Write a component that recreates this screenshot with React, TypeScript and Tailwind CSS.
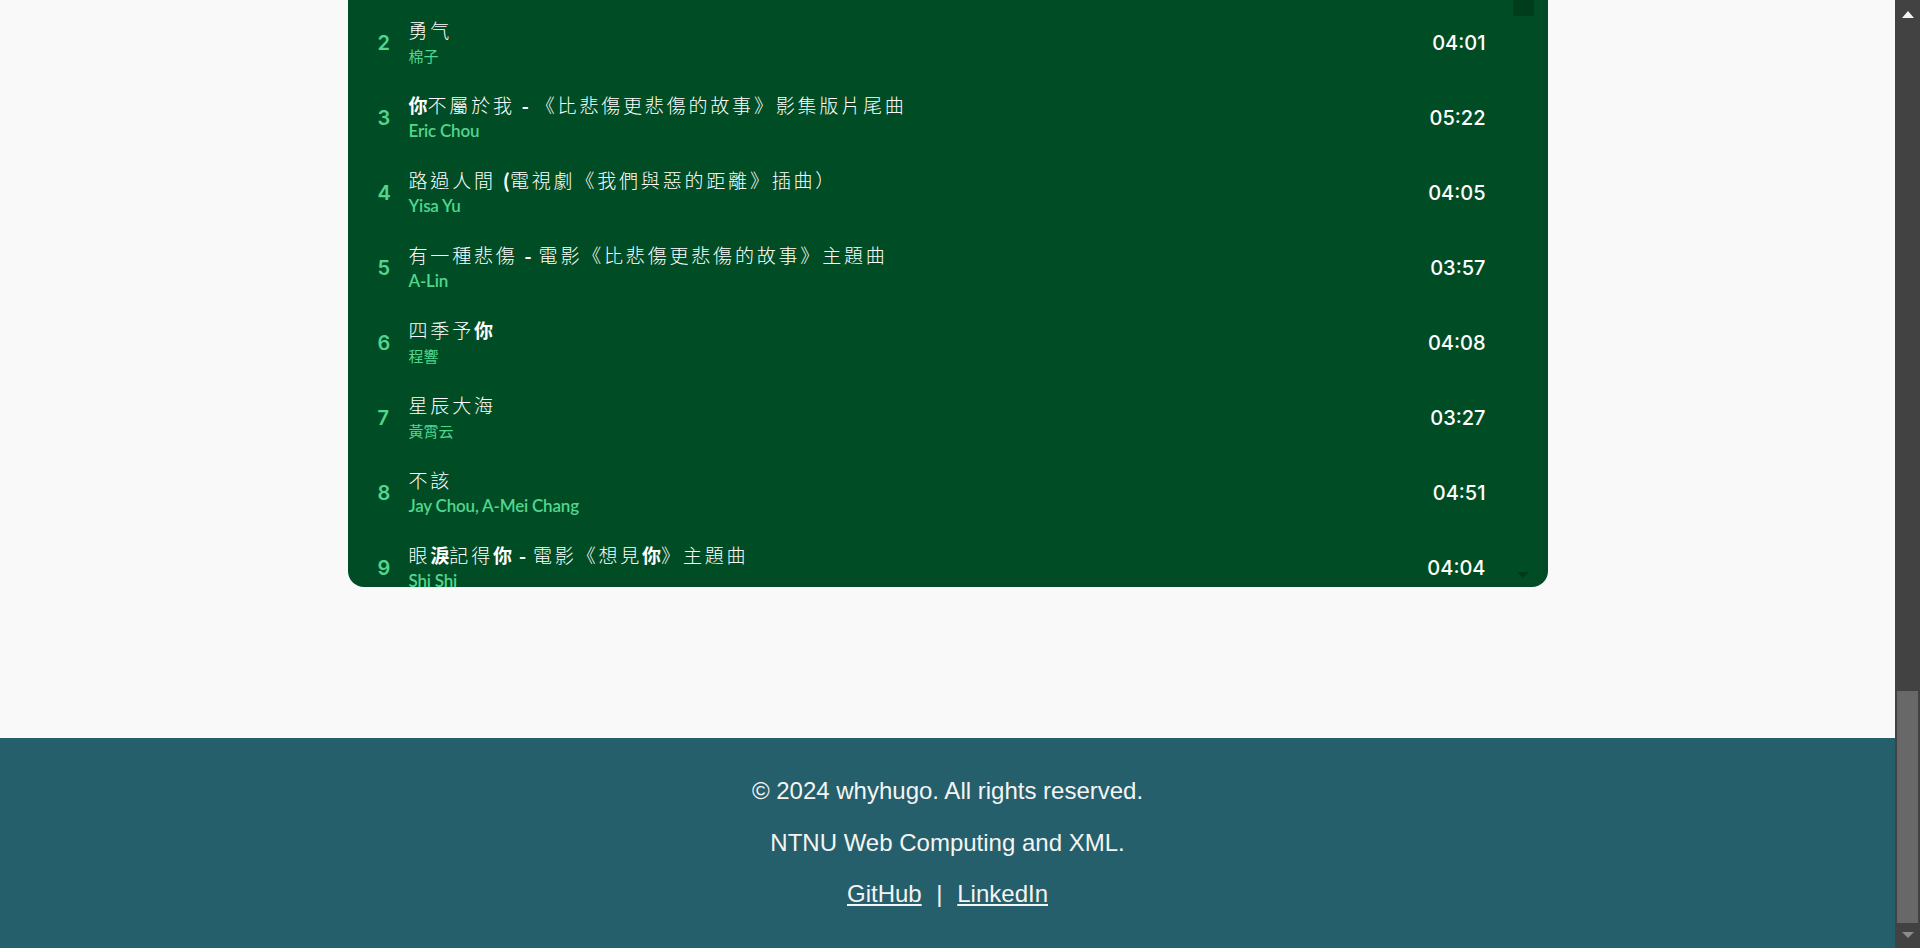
import React from "react";

const songs = [
  { n: 2, title: "勇气", artist: "棉子", time: "04:01" },
  { n: 3, title: "你不屬於我 - 《比悲傷更悲傷的故事》影集版片尾曲", artist: "Eric Chou", time: "05:22" },
  { n: 4, title: "路過人間 (電視劇《我們與惡的距離》插曲）", artist: "Yisa Yu", time: "04:05" },
  { n: 5, title: "有一種悲傷 - 電影《比悲傷更悲傷的故事》主題曲", artist: "A-Lin", time: "03:57" },
  { n: 6, title: "四季予你", artist: "程響", time: "04:08" },
  { n: 7, title: "星辰大海", artist: "黃霄云", time: "03:27" },
  { n: 8, title: "不該", artist: "Jay Chou, A-Mei Chang", time: "04:51" },
  { n: 9, title: "眼淚記得你 - 電影《想見你》主題曲", artist: "Shi Shi", time: "04:04" },
];

const boldChars = new Set(["你", "淚", "-", "("]);

function Title({ text }: { text: string }) {
  return (
    <>
      {Array.from(text).map((c, i) =>
        boldChars.has(c) ? (
          <span key={i} className="font-bold tracking-normal">
            {c}
          </span>
        ) : (
          <React.Fragment key={i}>{c}</React.Fragment>
        )
      )}
    </>
  );
}

export default function App() {
  return (
    <div className="flex h-[948px] w-full overflow-hidden bg-[#f9f9f9]">
      <div className="flex min-w-0 flex-1 flex-col">
        <main className="h-[738px] shrink-0">
          <div className="mx-auto flex h-[587px] w-[1200px] overflow-hidden rounded-b-2xl bg-[#004d25]">
            <ul className="flex-1 overflow-hidden pt-[5px]">
              {songs.map((s) => {
                const latin = /[A-Za-z]/.test(s.artist);
                return (
                  <li key={s.n} className="flex h-[75px] shrink-0 items-center pl-[30px] pr-[27px]">
                    <span className="w-[31px] font-['Inter',sans-serif] text-[20px] font-semibold text-[#52d68e]">
                      {s.n}
                    </span>
                    <div className="flex min-w-0 flex-1 flex-col">
                      <span className="font-['Noto_Sans_CJK_TC',sans-serif] text-[19px] font-light leading-[24px] tracking-[2.8px] text-white">
                        <Title text={s.title} />
                      </span>
                      {latin ? (
                        <span className="mt-[2px] font-['Lato',sans-serif] text-[17px] font-semibold leading-[24px] tracking-[-0.2px] text-[#52d68e]">
                          {s.artist}
                        </span>
                      ) : (
                        <span className="mt-[2px] font-['Noto_Sans_CJK_TC',sans-serif] text-[15px] font-normal leading-[24px] text-[#52d68e]">
                          {s.artist}
                        </span>
                      )}
                    </div>
                    <span className="font-['Inter',sans-serif] text-[20px] font-medium text-white">{s.time}</span>
                  </li>
                );
              })}
            </ul>
            <div className="mr-[14px] flex w-[21px] flex-col items-center justify-between pb-[9px]">
              <div className="h-[16px] w-full bg-[#003d1c]" />
              <div className="h-0 w-0 border-x-[6px] border-t-[6px] border-x-transparent border-t-[#003a1a]" />
            </div>
          </div>
        </main>
        <footer className="flex-1 bg-[#245f6b] pt-[15px] text-center font-['Liberation_Sans',Arial,sans-serif] text-[24px] leading-[27.6px] text-[#f4f4f4]">
          <p className="my-6">© 2024 whyhugo. All rights reserved.</p>
          <p className="my-6">NTNU Web Computing and XML.</p>
          <p className="my-6">
            <a className="underline" href="#">
              GitHub
            </a>{" "}
            <span className="mx-2">|</span>{" "}
            <a className="underline" href="#">
              LinkedIn
            </a>
          </p>
        </footer>
      </div>
      <div className="flex w-[25px] shrink-0 flex-col bg-[#424242]">
        <div className="flex h-[25px] items-start justify-center pt-[11px]">
          <div className="h-0 w-0 border-x-[6px] border-b-[7px] border-x-transparent border-b-[#f2f2f2]" />
        </div>
        <div className="flex-1" />
        <div className="mx-[2px] h-[232px] bg-[#686868]" />
        <div className="flex h-[25px] items-start justify-center pt-[9px]">
          <div className="h-0 w-0 border-x-[6px] border-t-[6px] border-x-transparent border-t-[#8c8c8c]" />
        </div>
      </div>
    </div>
  );
}
